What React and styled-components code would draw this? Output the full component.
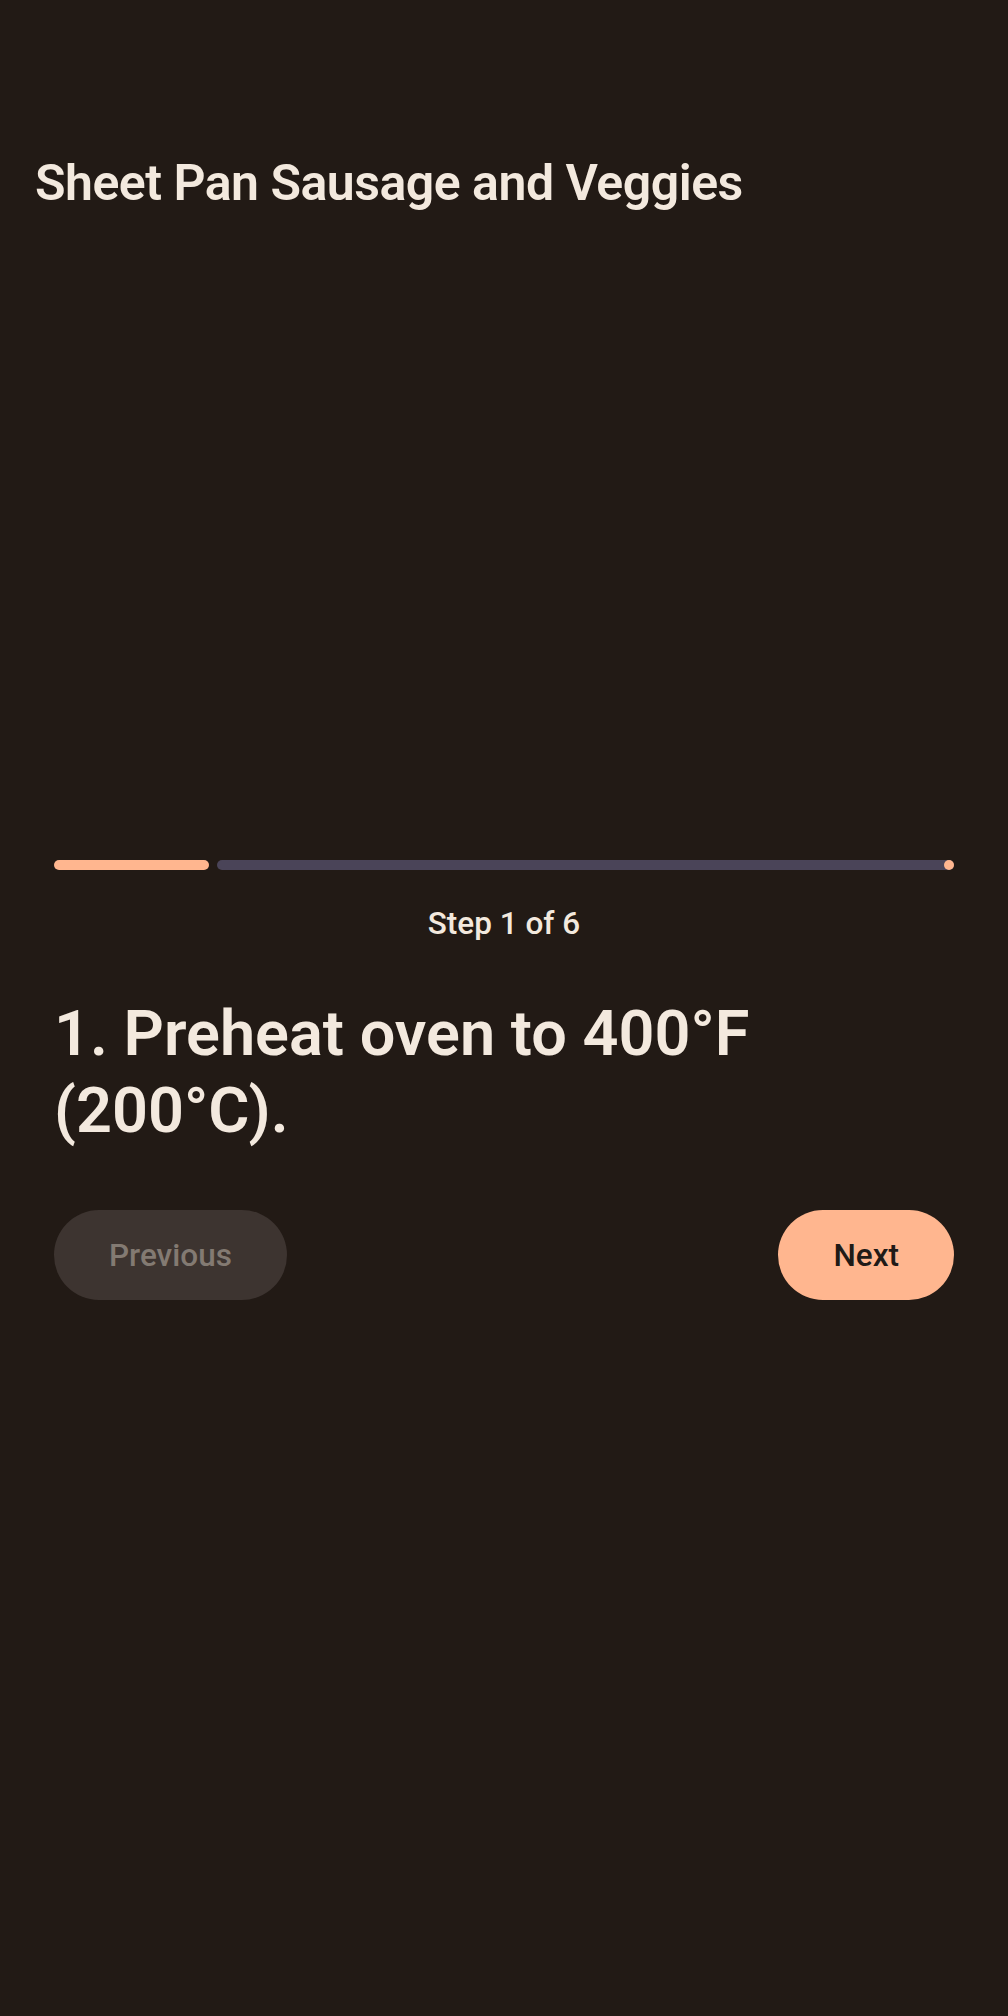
import React, { useState } from "react";
import styled, { createGlobalStyle } from "styled-components";

const GlobalStyle = createGlobalStyle`
  html, body {
    margin: 0;
    padding: 0;
    background: #221a15;
  }
  body {
    font-family: Roboto, "Noto Sans", "Liberation Sans", sans-serif;
    -webkit-font-smoothing: antialiased;
  }
`;

const Screen = styled.div`
  min-height: 2016px;
  width: 1008px;
  background: #221a15;
  color: #f3e9de;
  display: flex;
  flex-direction: column;
`;

const Header = styled.header`
  padding: 151px 35px 0;
`;

const Title = styled.h1`
  margin: 0;
  font-size: 50px;
  line-height: 64px;
  letter-spacing: -0.5px;
  font-weight: 600;
  color: #f3e9de;
`;

const Body = styled.main`
  padding: 0 54px;
  margin-top: 645px;
  display: flex;
  flex-direction: column;
`;

const Progress = styled.div`
  display: flex;
  align-items: center;
  gap: 8px;
  height: 10px;
  position: relative;
`;

const Indicator = styled.div`
  height: 10px;
  border-radius: 5px;
  background: #ffb68f;
  flex: none;
`;

const Track = styled.div`
  height: 10px;
  border-radius: 5px;
  background: #4a4458;
  flex: 1;
`;

const StopDot = styled.span`
  position: absolute;
  right: 0;
  top: 50%;
  width: 10px;
  height: 10px;
  margin-top: -5px;
  border-radius: 50%;
  background: #ffb68f;
`;

const StepLabel = styled.div`
  margin-top: 33px;
  text-align: center;
  font-size: 31.5px;
  line-height: 42px;
  font-weight: 500;
  color: #f3e9de;
`;

const Instruction = styled.h2`
  margin: 50px 0 0;
  font-size: 63px;
  line-height: 77px;
  font-weight: 600;
  color: #f3e9de;
  padding-right: 40px;
`;

const Controls = styled.div`
  margin-top: 61px;
  display: flex;
  justify-content: space-between;
`;

const Pill = styled.button`
  height: 90px;
  padding: 0 55px;
  border: none;
  border-radius: 45px;
  font-family: inherit;
  font-size: 31.5px;
  font-weight: 500;
  cursor: pointer;
  background: ${(p) => (p.$primary ? "#ffb68f" : "#3d3430")};
  color: ${(p) => (p.$primary ? "#201a17" : "#837a72")};

  &:disabled {
    cursor: default;
  }
`;

const steps = [
  "1. Preheat oven to 400°F (200°C).",
  "2. Chop the vegetables into bite-sized pieces.",
  "3. Slice the sausage into rounds.",
  "4. Toss everything with olive oil and seasoning.",
  "5. Spread on a sheet pan and roast for 25 minutes.",
  "6. Serve warm.",
];

export default function App() {
  const [step, setStep] = useState(0);
  const total = steps.length;
  const pct = ((step + 1) / total) * 100;

  return (
    <>
      <GlobalStyle />
      <Screen>
        <Header>
          <Title>Sheet Pan Sausage and Veggies</Title>
        </Header>
        <Body>
          <Progress>
            <Indicator style={{ width: `calc(${pct}% + 5px)` }} />
            {step < total - 1 && <Track />}
            <StopDot />
          </Progress>
          <StepLabel>
            Step {step + 1} of {total}
          </StepLabel>
          <Instruction>{steps[step]}</Instruction>
          <Controls>
            <Pill disabled={step === 0} onClick={() => setStep(step - 1)}>
              Previous
            </Pill>
            <Pill $primary onClick={() => setStep(Math.min(step + 1, total - 1))}>
              Next
            </Pill>
          </Controls>
        </Body>
      </Screen>
    </>
  );
}
